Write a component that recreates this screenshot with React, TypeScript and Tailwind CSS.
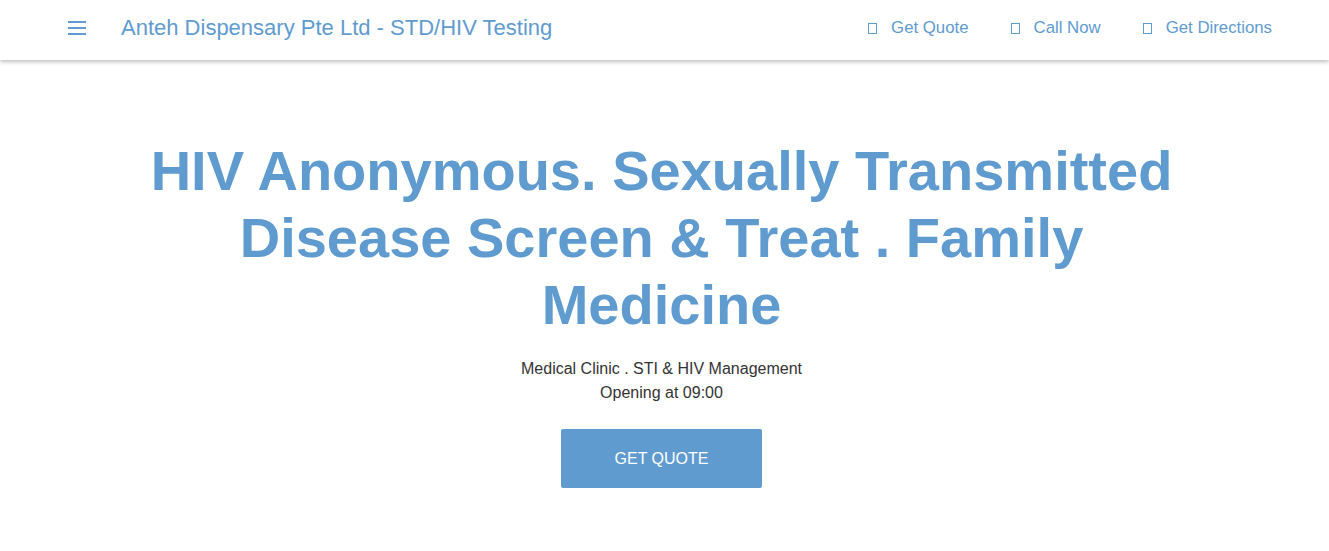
import React from "react";

const navItems = ["Get Quote", "Call Now", "Get Directions"];

function Tofu() {
    return <span className="inline-block w-[9px] h-[11px] border border-[#5f9bcf] mr-[14px] translate-y-[1px]"></span>;
}

export default function App() {
    return (
        <div className="min-h-screen bg-white font-['Liberation_Sans',Arial,sans-serif]">
            <header className="h-[60px] pb-[5px] flex items-center justify-between pl-[68px] pr-[57px] bg-white shadow-[0_2px_4px_rgba(0,0,0,0.25)]">
                <div className="flex items-center">
                    <div className="flex flex-col gap-[4px] w-[18px] mr-[35px]">
                        <span className="block h-[2px] bg-[#5f9bcf]"></span>
                        <span className="block h-[2px] bg-[#5f9bcf]"></span>
                        <span className="block h-[2px] bg-[#5f9bcf]"></span>
                    </div>
                    <span className="text-[22px] text-[#5f9bcf]">Anteh Dispensary Pte Ltd - STD/HIV Testing</span>
                </div>
                <nav className="flex items-center gap-[42px]">
                    {navItems.map(item => (
                        <a key={item} className="flex items-center text-[16.8px] text-[#5f9bcf]">
                            <Tofu />
                            {item}
                        </a>
                    ))}
                </nav>
            </header>
            <main className="flex flex-col items-center pt-[77px] pr-[6px]">
                <h1 className="max-w-[1060px] text-center text-[56px] leading-[67px] font-bold text-[#5f9bcf]">
                    HIV Anonymous. Sexually Transmitted Disease Screen &amp; Treat . Family Medicine
                </h1>
                <div className="mt-[19px] text-center text-[16px] leading-[24px] text-[#333333]">
                    <p>Medical Clinic . STI &amp; HIV Management</p>
                    <p>Opening at 09:00</p>
                </div>
                <button className="mt-[24px] w-[201px] h-[59px] rounded-[2px] bg-[#5f9bcf] text-white text-[16px] uppercase">
                    Get Quote
                </button>
            </main>
        </div>
    );
}
